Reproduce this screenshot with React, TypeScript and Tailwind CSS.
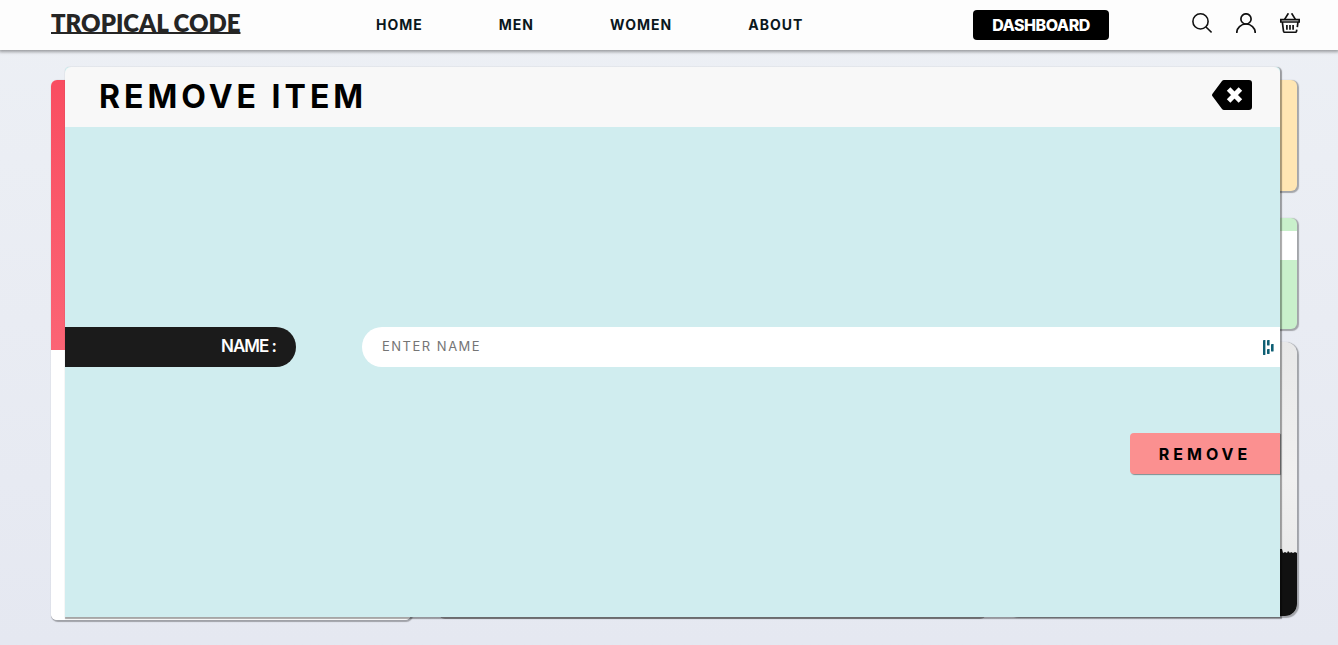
const navLinks = ["HOME", "MEN", "WOMEN", "ABOUT"];

function SearchIcon() {
  return (
    <svg viewBox="0 0 20 20" className="size-5" fill="none" stroke="#111" strokeWidth="1.6" aria-hidden="true">
      <circle cx="8.5" cy="8.4" r="7.6" />
      <path d="M14 14l5.6 5.4" />
    </svg>
  );
}

function UserIcon() {
  return (
    <svg viewBox="0 0 20 20" className="size-5" fill="none" stroke="#111" strokeWidth="1.7" aria-hidden="true">
      <circle cx="10" cy="5.9" r="5.1" />
      <path d="M.8 20v-.4a9.2 8.6 0 0 1 18.4 0v.4" />
    </svg>
  );
}

function BasketIcon() {
  return (
    <svg viewBox="0 0 20 20" className="size-5" fill="none" stroke="#111" strokeWidth="1.7" aria-hidden="true">
      <path d="M4.6 6.4L8.4.3M15.4 6.4L11.6.3" />
      <path d="M.8 6.7h18.4v2.3H.8zM2.4 9.5l1.1 8.7q.2 1.1 1.3 1.1h10.4q1 0 1.3-1.1l.3-1.6M17.3 14.2l.6-4.7" />
      <path d="M6.9 12v4.8M10 12v4.8M13.1 12v4.8" />
    </svg>
  );
}

function BackspaceIcon() {
  return (
    <svg viewBox="0 0 40 30" className="h-[30px] w-10" aria-hidden="true">
      <path d="M12 0h25q3 0 3 3v24q0 3-3 3H12q-1.2 0-2-1L.5 16.3q-1-1.300 0-2.600L10 1q.8-1 2-1z" fill="#000" />
      <path d="M16.6 9.1L28.4 20.9M28.4 9.1L16.6 20.9" stroke="#fff" strokeWidth="5" />
    </svg>
  );
}

function FillIcon() {
  return (
    <svg viewBox="0 0 12 16" className="h-4 w-3" fill="#0e5f74" aria-hidden="true">
      <rect x="1" y="1" width="2.4" height="15" rx=".4" />
      <rect x="5" y="1" width="2.6" height="5.5" rx=".4" />
      <rect x="5" y="10" width="2.6" height="5" rx=".4" />
      <rect x="9" y="5" width="2.6" height="7.5" rx=".4" />
    </svg>
  );
}

function Header() {
  return (
    <header className="relative z-20 flex h-[50px] items-center bg-[#fdfdfd] pr-[38px] pl-[51px] shadow-[0_1px_3px_1px_rgba(0,0,0,0.35)]">
      <a
        href="#"
        className="w-[194px] shrink-0 pb-1 text-2xl leading-6 font-extrabold whitespace-nowrap text-[#252525] underline decoration-2 underline-offset-0 [font-family:Lato,sans-serif] [text-decoration-skip-ink:none]"
      >
        TROPICAL CODE
      </a>
      <nav className="ml-[131px] flex gap-[76px]">
        {navLinks.map((link) => (
          <a key={link} href="#" className="text-sm font-bold tracking-[1px] text-[#0a171c]">
            {link}
          </a>
        ))}
      </nav>
      <a
        href="#"
        className="ml-auto flex h-[30px] w-[136px] items-center justify-center rounded bg-black text-base font-extrabold tracking-[-0.5px] text-white"
      >
        DASHBOARD
      </a>
      <div className="ml-[83px] flex gap-6 pb-1">
        <button type="button" aria-label="Search"><SearchIcon /></button>
        <button type="button" aria-label="Account"><UserIcon /></button>
        <button type="button" aria-label="Basket"><BasketIcon /></button>
      </div>
    </header>
  );
}

function DashboardCards() {
  return (
    <main className="grid grid-cols-[360fr_555fr_291fr] gap-x-5 pt-[30px] pr-[41px] pb-6 pl-[51px]">
      <section className="flex flex-col overflow-hidden rounded-md bg-white shadow-[1px_1px_1px_1px_rgba(0,0,0,0.3)]">
        <div className="h-[270px] bg-linear-to-b from-[#f94d61] to-[#fb6475]" />
        <div className="h-[270px] rounded-t bg-white" />
      </section>
      <section className="mb-px ml-2 rounded-md bg-[#a5a5aa]" />
      <section className="flex flex-col">
        <div className="h-[111px] rounded-md bg-[#ffe6b3] shadow-[1px_1px_1px_1px_rgba(0,0,0,0.3)]" />
        <div className="mt-[27px] h-[111px] rounded-md bg-[#c9f0cb] pt-[13px] shadow-[1px_1px_1px_1px_rgba(0,0,0,0.3)]">
          <div className="h-[29px] bg-white" />
        </div>
        <div className="mt-[13px] flex h-[274px] flex-col justify-end overflow-hidden rounded-xl bg-linear-to-b from-[#e8e8e8] via-[#f0f0f0] to-[#e6e6e6] shadow-[1px_1px_1px_1px_rgba(0,0,0,0.3)]">
          <svg viewBox="0 0 291 70" preserveAspectRatio="none" className="h-[70px] w-full" fill="#111" aria-hidden="true">
            <path d="M0 2L268 0l3 1 2-1 1 3 2 0 1 4 2-1 2 1 1-2 2 2 1-1 2 1 2-1 2 1v63H0z" />
          </svg>
        </div>
      </section>
    </main>
  );
}

function RemoveDialog() {
  return (
    <div
      role="dialog"
      aria-labelledby="dialog-title"
      className="absolute top-[67px] right-[58px] bottom-7 left-[65px] z-10 flex flex-col rounded-t bg-[#d0edef] shadow-[1px_1px_1px_1px_rgba(0,0,0,0.35)]"
    >
      <div className="flex h-[60px] items-center justify-between rounded-t-md bg-[#f8f8f8] pr-7 pl-[34px]">
        <h1 id="dialog-title" className="text-[32px] leading-10 font-bold tracking-[4px] text-black">REMOVE ITEM</h1>
        <button type="button" aria-label="Close" className="mb-1"><BackspaceIcon /></button>
      </div>
      <form className="flex flex-1 flex-col justify-center gap-[66px] pt-[57px]" onSubmit={(e) => e.preventDefault()}>
        <div className="flex gap-[66px]">
          <label
            htmlFor="item-name"
            className="flex h-10 w-[231px] shrink-0 items-center justify-end rounded-r-full bg-[#1b1b1b] pr-5 text-[17px] font-semibold tracking-[-1px] text-white"
          >
            NAME :
          </label>
          <div className="flex h-10 flex-1 items-center rounded-l-full bg-white pr-[6px] pl-5">
            <input
              id="item-name"
              type="text"
              placeholder="ENTER NAME"
              className="min-w-0 flex-1 bg-transparent text-[13px] tracking-[1.5px] text-black outline-none placeholder:text-[#757575]"
            />
            <FillIcon />
          </div>
        </div>
        <button
          type="submit"
          className="h-[41px] w-[150px] self-end rounded-l bg-[#fb9090] text-base font-bold tracking-[4px] text-black shadow-[1px_1px_1px_rgba(0,0,0,0.4)]"
        >
          REMOVE
        </button>
      </form>
    </div>
  );
}

export default function App() {
  return (
    <div className="relative min-h-screen bg-linear-to-b from-[#edf0f5] to-[#e5e8f1] [font-family:Inter,sans-serif]">
      <Header />
      <DashboardCards />
      <RemoveDialog />
    </div>
  );
}
